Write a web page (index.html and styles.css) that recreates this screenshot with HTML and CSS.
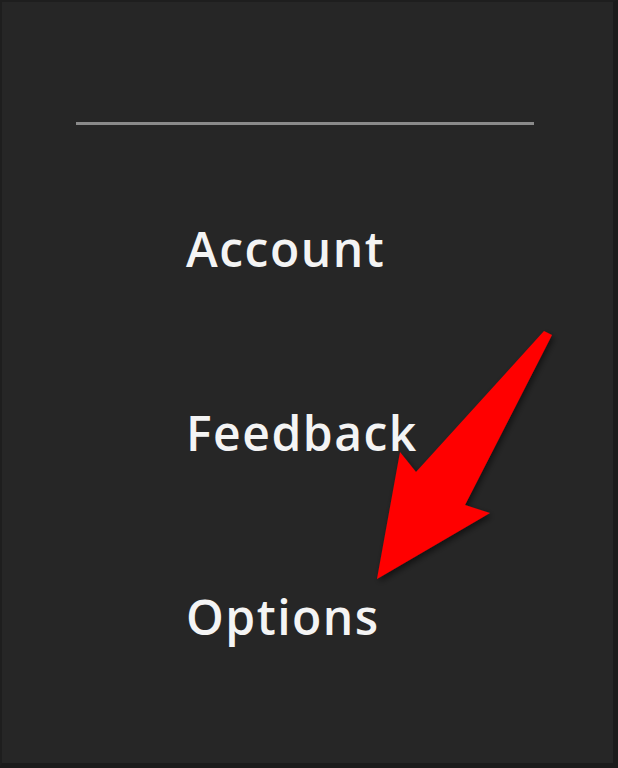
FILE: index.html
```html
<!DOCTYPE html>
<html lang="en">
<head>
<meta charset="utf-8">
<title>Menu</title>
<link rel="stylesheet" href="styles.css">
</head>
<body>
<div class="panel">
  <div class="divider"></div>
  <nav class="menu">
    <div class="menu-item">Account</div>
    <div class="menu-item">Feedback</div>
    <div class="menu-item">Options</div>
  </nav>
  <svg class="arrow" width="618" height="768" viewBox="0 0 618 768" aria-hidden="true">
    <defs>
      <filter id="shadow" x="-20%" y="-20%" width="140%" height="140%">
        <feDropShadow dx="2" dy="3" stdDeviation="3" flood-color="#000" flood-opacity="0.55"/>
      </filter>
    </defs>
    <polygon points="544,331 552,335 465,505 490,513 377,579 400,452 416,472" fill="#ff0000" filter="url(#shadow)"/>
  </svg>
</div>
</body>
</html>
```
FILE: styles.css
```css
html, body {
  margin: 0;
  padding: 0;
  background: #262626;
}
.panel {
  position: relative;
  width: 618px;
  height: 768px;
  box-sizing: border-box;
  background: #262626;
  border-top: 2px solid #1e1e1e;
  border-left: 2px solid #1e1e1e;
  border-right: 5px solid #1b1b1b;
  border-bottom: 5px solid #1b1b1b;
  padding-top: 120px;
  overflow: hidden;
}
.divider {
  margin-left: 74px;
  width: 458px;
  height: 3px;
  background: #8a8a8a;
}
.menu {
  display: flex;
  flex-direction: column;
  gap: 124px;
  margin-top: 94px;
  padding-left: 184px;
}
.menu-item {
  font-family: "Open Sans", "Noto Sans", sans-serif;
  font-size: 48px;
  font-weight: 600;
  line-height: 60px;
  color: #f4f4f4;
  letter-spacing: 1.5px;
}
.arrow {
  position: absolute;
  left: -2px;
  top: -2px;
}
```
